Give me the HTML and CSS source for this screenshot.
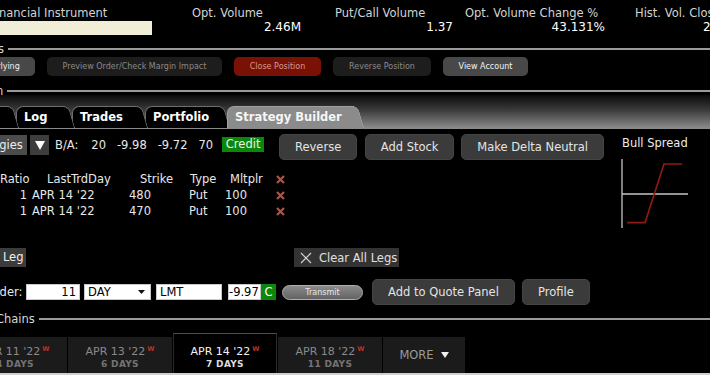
FILE: index.html
```html
<!DOCTYPE html>
<html>
<head>
<meta charset="utf-8">
<link rel="stylesheet" href="styles.css">
</head>
<body>
<div class="app">
  <div class="stats">
    <div class="stat fin">
      <div class="lbl fin-lbl">Financial Instrument</div>
      <div class="cream"></div>
    </div>
    <div class="stat c2"><div class="lbl">Opt. Volume</div><div class="val">2.46M</div></div>
    <div class="stat c3"><div class="lbl">Put/Call Volume</div><div class="val">1.37</div></div>
    <div class="stat c4"><div class="lbl">Opt. Volume Change %</div><div class="val">43.131%</div></div>
    <div class="stat c5"><div class="lbl">Hist. Vol. Close</div><div class="val lft">24.6%</div></div>
  </div>

  <div class="section s1"><span class="sec-lbl">s</span><i class="rule"></i></div>

  <div class="actions">
    <div class="abtn under">Underlying</div>
    <div class="abtn prev">Preview Order/Check Margin Impact</div>
    <div class="abtn close">Close Position</div>
    <div class="abtn rev">Reverse Position</div>
    <div class="abtn view">View Account</div>
  </div>

  <div class="section s2"><span class="sec-lbl n">n</span><i class="rule"></i></div>

  <div class="tabbar">
    <div class="tab t0"></div>
    <div class="tab t1">Log</div>
    <div class="tab t2">Trades</div>
    <div class="tab t3">Portfolio</div>
    <div class="tab t4 active">Strategy Builder</div>
  </div>

  <div class="builder">
    <div class="left">
      <div class="row1">
        <div class="strat">Strategies</div>
        <div class="dd"><svg width="10" height="9" viewBox="0 0 10 9"><polygon points="0,0 10,0 5,9" fill="#fff"/></svg></div>
        <span class="ba t-ba">B/A:</span>
        <span class="ba t-20">20</span>
        <span class="ba t-998">-9.98</span>
        <span class="ba t-972">-9.72</span>
        <span class="ba t-70">70</span>
        <span class="credit">Credit</span>
        <div class="btn b-rev">Reverse</div>
        <div class="btn b-stock">Add Stock</div>
        <div class="btn b-delta">Make Delta Neutral</div>
      </div>

      <div class="legs">
        <div class="c r">Ratio</div>
        <div class="c h-day">LastTrdDay</div>
        <div class="c r">Strike</div>
        <div class="c h-type">Type</div>
        <div class="c h-mult">Mltplr</div>
        <div class="c x"><svg width="9" height="9" viewBox="0 0 9 9"><path d="M1 1L8 8M8 1L1 8" stroke="#a8574c" stroke-width="2.2"/></svg></div>

        <div class="c r">1</div>
        <div class="c d-day">APR 14 '22</div>
        <div class="c r d-strike">480</div>
        <div class="c d-type">Put</div>
        <div class="c d-mult">100</div>
        <div class="c x"><svg width="9" height="9" viewBox="0 0 9 9"><path d="M1 1L8 8M8 1L1 8" stroke="#a8574c" stroke-width="2.2"/></svg></div>

        <div class="c r">1</div>
        <div class="c d-day">APR 14 '22</div>
        <div class="c r d-strike">470</div>
        <div class="c d-type">Put</div>
        <div class="c d-mult">100</div>
        <div class="c x"><svg width="9" height="9" viewBox="0 0 9 9"><path d="M1 1L8 8M8 1L1 8" stroke="#a8574c" stroke-width="2.2"/></svg></div>
      </div>

      <div class="legrow">
        <div class="addleg">Add Leg</div>
        <div class="clear"><svg width="12" height="12" viewBox="0 0 12 12"><path d="M1 1L11 11M11 1L1 11" stroke="#d0d0d0" stroke-width="1.2"/></svg><span>Clear All Legs</span></div>
      </div>

      <div class="order">
        <span class="olbl">Order:</span>
        <div class="inp qty">11</div>
        <div class="inp tif">DAY<svg width="7" height="4" viewBox="0 0 7 4"><polygon points="0,0 7,0 3.5,4" fill="#111"/></svg></div>
        <div class="inp typ">LMT</div>
        <div class="inp prc">-9.97</div>
        <div class="cflag">C</div>
        <div class="transmit">Transmit</div>
        <div class="btn b-quote">Add to Quote Panel</div>
        <div class="btn b-prof">Profile</div>
      </div>
    </div>

    <div class="right">
      <div class="bs-title">Bull Spread</div>
      <svg class="chart" width="72" height="72" viewBox="0 0 72 72">
        <line x1="2" y1="1" x2="2" y2="70" stroke="#c4c4c4" stroke-width="1.3"/>
        <line x1="2" y1="36" x2="68" y2="36" stroke="#c4c4c4" stroke-width="1.3"/>
        <polyline points="7,64.7 25,64.7 44,6 62,6" fill="none" stroke="#8e1b12" stroke-width="1.7"/>
      </svg>
    </div>
  </div>

  <div class="section chains"><span class="sec-lbl">Chains</span><i class="rule"></i></div>

  <div class="exp">
    <div class="etab first"><div class="d1">APR 11 '22<sup>W</sup></div><div class="d2">4 DAYS</div></div>
    <div class="etab"><div class="d1">APR 13 '22<sup>W</sup></div><div class="d2">6 DAYS</div></div>
    <div class="etab on"><div class="d1">APR 14 '22<sup>W</sup></div><div class="d2">7 DAYS</div></div>
    <div class="etab"><div class="d1">APR 18 '22<sup>W</sup></div><div class="d2">11 DAYS</div></div>
    <div class="etab more"><span>MORE</span><svg width="8" height="6" viewBox="0 0 8 6"><polygon points="0,0 8,0 4,6" fill="#f0f0f0"/></svg></div>
  </div>
  <div class="strip"></div>
</div>
</body>
</html>
```

FILE: styles.css
```css
* { box-sizing: border-box; margin: 0; padding: 0; }
html, body { background: #000; }
body {
  font-family: "DejaVu Sans", Verdana, sans-serif;
  font-size: 11.5px;
  color: #e6e6e6;
  width: 710px;
  height: 375px;
  overflow: hidden;
}
.app {
  width: 710px;
  height: 375px;
  overflow: hidden;
  display: flex;
  flex-direction: column;
}

/* stats header */
.stats { display: flex; height: 40px; padding-top: 6px; flex: none; }
.stat { display: flex; flex-direction: column; flex: none; }
.lbl { height: 14px; line-height: 14px; color: #d4d4d4; white-space: nowrap; }
.val { height: 15px; line-height: 15px; font-size: 12px; color: #fff; text-align: right; white-space: nowrap; }
.fin { width: 152px; }
.fin-lbl { margin-left: -10px; }
.cream { height: 14px; margin-top: 1px; background: #f1eed8; }
.c2 { width: 109px; margin-left: 40px; }
.c3 { width: 118px; margin-left: 34px; }
.c4 { width: 140px; margin-left: 12px; }
.c5 { width: 120px; margin-left: 30px; }
.val.lft { text-align: left; padding-left: 68px; }

/* section rules */
.section { display: flex; align-items: center; flex: none; height: 14px; gap: 4px; }
.sec-lbl { color: #d8d8d8; white-space: nowrap; margin-left: -2px; line-height: 14px; }
.sec-lbl.n { margin-left: -4px; }
.rule { flex: 1; height: 2px; background: #9a9a9a; }
.s1 { margin-top: 2px; }
.s2 { margin-top: 11px; height: 8px; }
.s2 .sec-lbl { line-height: 8px; overflow: hidden; height: 8px; }

/* action buttons */
.actions { display: flex; gap: 12px; height: 19px; margin-top: 1px; flex: none; }
.abtn {
  height: 19px; border-radius: 5px; font-size: 8px; flex: none;
  display: flex; align-items: center; justify-content: center;
  background: #1d1d1d; color: #8a8a8a; white-space: nowrap;
}
.abtn.under { width: 74px; margin-left: -39px; background: #484848; color: #eee; }
.abtn.prev { width: 175px; }
.abtn.close { width: 87px; background: #7a1105; color: #d39a90; }
.abtn.rev { width: 98px; }
.abtn.view { width: 85px; background: #484848; color: #f2f2f2; }

/* tab bar */
.tabbar {
  height: 34px; flex: none; display: flex; align-items: flex-end;
  background: linear-gradient(#0a0a0a, #3a3a3a 45%, #8a8a8a);
  border-bottom: 1px solid #8b8b8b;
}
.tab {
  position: relative; height: 22px; line-height: 22px; padding-left: 8px;
  font-weight: bold; color: #fff; flex: none; white-space: nowrap;
}
.tab::before {
  content: ""; position: absolute; left: 0; top: 0; bottom: 0; right: 7px;
  background: #000; border: 1px solid #6e6e6e; border-width: 1px 0 0 1px;
  border-top-left-radius: 7px; z-index: -1;
}
.tab::after {
  content: ""; position: absolute; right: 0; top: 0; bottom: 0; width: 16px;
  background: #000; border: 1px solid #6e6e6e; border-width: 1px 1px 0 0;
  border-top-right-radius: 6px; transform: skewX(16deg); z-index: -1;
}
.t0 { width: 56px; margin-left: -40px; z-index: 6; }
.t1 { width: 56px; z-index: 5; }
.t2 { width: 73px; z-index: 4; }
.t3 { width: 82px; z-index: 3; }
.t4 { width: 134px; z-index: 7; }
.tab.active { color: #f6f6f6; }
.tab.active::before, .tab.active::after { background: #8b8b8b; border-color: #a0a0a0; }

/* builder */
.builder { display: flex; flex: none; }
.left { width: 616px; flex: none; }
.row1 { display: flex; align-items: flex-start; margin-top: 5px; height: 26px; }
.strat {
  margin-left: -40px; width: 67px; height: 20px; margin-top: 1px;
  background: #4b4b4b; padding-left: 4px; line-height: 20px; color: #eee; white-space: nowrap; overflow: hidden;
}
.dd {
  width: 19px; height: 20px; margin-left: 3px; margin-top: 1px; background: #3d3d3d;
  display: flex; align-items: center; justify-content: center;
}
.ba { line-height: 20px; margin-top: 1px; white-space: nowrap; color: #e8e8e8; }
.t-ba { margin-left: 6px; }
.t-20 { margin-left: 13px; }
.t-998 { margin-left: 11px; }
.t-972 { margin-left: 11px; }
.t-70 { margin-left: 11px; }
.credit {
  margin-left: 9px; margin-top: 3px; width: 42px; height: 15px; line-height: 15px;
  background: #0b880b; color: #e6f5e6; text-align: center;
}
.btn {
  height: 26px; border-radius: 5px; background: #3b3b3b; color: #e4e4e4;
  display: flex; align-items: center; justify-content: center; flex: none; white-space: nowrap;
  border: 1px solid #444;
}
.b-rev { margin-left: 15px; width: 78px; }
.b-stock { margin-left: 8px; width: 89px; }
.b-delta { margin-left: 7px; width: 143px; }

.legs {
  display: grid;
  grid-template-columns: 27px 93px 53px 49px 48px 20px;
  grid-auto-rows: 16px;
  line-height: 16px;
  margin-top: 11px;
  width: 290px;
  color: #e8e8e8;
}
.c { white-space: nowrap; }
.r { text-align: right; }
.h-day { padding-left: 20px; }
.h-type { padding-left: 17px; }
.h-mult { padding-left: 8px; }
.d-day { padding-left: 5px; }
.d-strike { padding-right: 22px; }
.d-type { padding-left: 16px; }
.d-mult { padding-left: 3px; }
.x { display: flex; align-items: center; padding-left: 6px; }

.legrow { display: flex; height: 19px; margin-top: 29px; }
.addleg {
  margin-left: -30px; width: 56px; height: 19px; background: #3c3c3c; color: #f0f0f0;
  line-height: 19px; padding-left: 7px; white-space: nowrap;
}
.clear {
  margin-left: 268px; width: 105px; height: 19px; background: #333;
  display: flex; align-items: center; gap: 7px; padding-left: 6px; color: #e0e0e0; white-space: nowrap;
}

.order { display: flex; align-items: center; height: 26px; margin-top: 12px; }
.olbl { margin-left: -14px; width: 37px; white-space: nowrap; color: #e8e8e8; flex: none; }
.inp {
  height: 16px; background: #fff; color: #000; border: 1px solid #c8c8c8; line-height: 14px;
  flex: none; white-space: nowrap;
}
.qty { margin-left: 3px; width: 54px; text-align: right; padding-right: 3px; }
.tif { margin-left: 4px; width: 67px; padding-left: 3px; display: flex; align-items: center; justify-content: space-between; padding-right: 5px; }
.typ { margin-left: 5px; width: 66px; padding-left: 3px; }
.prc { margin-left: 6px; width: 33px; padding-left: 0; }
.cflag { width: 15px; height: 16px; background: #0b880b; color: #fff; text-align: center; line-height: 16px; flex: none; }
.transmit {
  margin-left: 6px; width: 81px; height: 15px; border-radius: 8px; flex: none;
  background: linear-gradient(#8a8a8a, #636363); border: 1px solid #b0b0b0;
  font-size: 8px; color: #e8e8e8; text-align: center; line-height: 13px;
}
.b-quote { margin-left: 9px; width: 143px; }
.b-prof { margin-left: 7px; width: 68px; }

.right { flex: 1; padding-top: 7px; padding-left: 6px; }
.bs-title { line-height: 14px; white-space: nowrap; color: #ececec; }
.chart { display: block; margin-top: 8px; margin-left: -2px; }

/* chains */
.chains { margin-top: 7px; }
.chains .sec-lbl { margin-left: -4px; }

.exp { display: flex; gap: 1px; align-items: flex-end; height: 40px; margin-top: 7px; flex: none; }
.etab {
  width: 104px; height: 36px; background: #1b1b1b; flex: none;
  display: flex; flex-direction: column; align-items: center; padding-top: 8px;
}
.etab.first { margin-left: -37px; }
.etab.on { height: 40px; background: #000; border-top: 1px solid #4c4c4c; border-left: 1px solid #2a2a2a; border-right: 1px solid #2a2a2a; padding-top: 11px; }
.d1 { font-size: 11px; line-height: 13px; color: #8a8a8a; white-space: nowrap; }
.d1 sup { font-size: 6.5px; font-weight: bold; color: #b8352b; vertical-align: top; margin-left: 2px; line-height: 8px; }
.d2 { font-size: 9px; font-weight: bold; line-height: 12px; color: #747474; letter-spacing: 0.3px; white-space: nowrap; }
.etab.on .d1 { color: #f2f2f2; }
.etab.on .d2 { color: #dcdcdc; }
.etab.more { width: 82px; flex-direction: row; justify-content: center; align-items: center; gap: 7px; padding-top: 0; color: #9a9a9a; }

.strip { height: 2px; background: #cfcfcf; flex: none; }
```
